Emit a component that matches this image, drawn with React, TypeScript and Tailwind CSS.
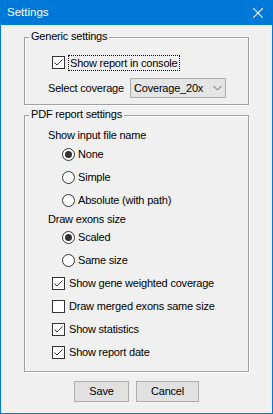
import type { ReactNode } from "react";

function Checkbox({ checked }: { checked: boolean }) {
  return (
    <span className="w-[13px] h-[13px] border border-[#333333] bg-white flex items-center justify-center shrink-0">
      {checked && (
        <svg width="11" height="11" viewBox="0 0 11 11">
          <path d="M1.5 5.5 L4 8 L9.5 2.5" stroke="#333333" fill="none" strokeWidth="1" />
        </svg>
      )}
    </span>
  );
}

function Radio({ checked }: { checked: boolean }) {
  return (
    <span className="w-[13px] h-[13px] rounded-full border border-[#333333] bg-white flex items-center justify-center shrink-0">
      {checked && <span className="w-[7px] h-[7px] rounded-full bg-[#333333]" />}
    </span>
  );
}

function Group({ title, className, children }: { title: string; className: string; children: ReactNode }) {
  return (
    <div
      className={`relative border border-[#a0a0a0] shadow-[inset_1px_1px_0_#ffffff,1px_1px_0_#ffffff] ${className}`}
    >
      <span className="absolute left-[4px] top-[-10px] bg-[#f0f0f0] px-[2px] leading-[17px] whitespace-nowrap">{title}</span>
      {children}
    </div>
  );
}

function CheckRow({ label, checked, className = "" }: { label: string; checked: boolean; className?: string }) {
  return (
    <div className={`h-[17px] flex items-center pl-[27px] gap-[4px] whitespace-nowrap ${className}`}>
      <Checkbox checked={checked} />
      <span>{label}</span>
    </div>
  );
}

function RadioRow({ label, checked, className = "" }: { label: string; checked: boolean; className?: string }) {
  return (
    <div className={`h-[17px] flex items-center pl-[37px] gap-[3px] whitespace-nowrap ${className}`}>
      <Radio checked={checked} />
      <span>{label}</span>
    </div>
  );
}

export default function App() {
  return (
    <div className="w-[273px] h-[414px] bg-[#f0f0f0] border border-t-0 border-[#0078d7] flex flex-col text-[11px] leading-[17px] tracking-[-0.2px] text-black font-['Liberation_Sans',Arial,sans-serif]">
      <div className="h-[25px] bg-[#0078d7] flex items-center justify-between pl-[6px] pr-[9px] text-white">
        <span className="text-[11.5px] tracking-normal">Settings</span>
        <svg width="10" height="10" viewBox="0 0 10 10">
          <path d="M0 0 L10 10 M10 0 L0 10" stroke="#ffffff" strokeWidth="1.1" />
        </svg>
      </div>

      <div className="flex flex-col px-[23px] pt-[12px]">
        <Group title="Generic settings" className="h-[68px] pt-[16px]">
          <div className="h-[17px] flex items-center pl-[27px] gap-[3px] whitespace-nowrap">
            <Checkbox checked />
            <span className="border border-dotted border-black px-[1px] leading-[14px]">Show report in console</span>
          </div>
          <div className="flex items-center mt-[7px] pl-[23px] whitespace-nowrap">
            <span className="w-[82px]">Select coverage</span>
            <div className="w-[96px] h-[20px] border border-[#acacac] bg-[#e5e5e5] flex items-center justify-between pl-[3px] pr-[3px]">
              <span>Coverage_20x</span>
              <svg width="9" height="6" viewBox="0 0 9 6">
                <path d="M0.5 1 L4.5 5 L8.5 1" stroke="#606060" fill="none" strokeWidth="1" />
              </svg>
            </div>
          </div>
        </Group>

        <Group title="PDF report settings" className="mt-[10px] h-[257px] pt-[11px]">
          <div className="h-[17px] flex items-center pl-[23px]">Show input file name</div>
          <RadioRow label="None" checked className="mt-[2px]" />
          <RadioRow label="Simple" checked={false} className="mt-[6px]" />
          <RadioRow label="Absolute (with path)" checked={false} className="mt-[6px]" />
          <div className="h-[17px] flex items-center pl-[23px] mt-[2px]">Draw exons size</div>
          <RadioRow label="Scaled" checked className="mt-[1px]" />
          <RadioRow label="Same size" checked={false} className="mt-[6px]" />
          <CheckRow label="Show gene weighted coverage" checked className="mt-[6px]" />
          <CheckRow label="Draw merged exons same size" checked={false} className="mt-[6px]" />
          <CheckRow label="Show statistics" checked className="mt-[6px]" />
          <CheckRow label="Show report date" checked className="mt-[6px]" />
        </Group>

        <div className="mt-[9px] flex justify-center gap-[7px]">
          <button className="w-[55px] h-[21px] border border-[#adadad] bg-[#e1e1e1] leading-[17px]">Save</button>
          <button className="w-[63px] h-[21px] border border-[#adadad] bg-[#e1e1e1] leading-[17px]">Cancel</button>
        </div>
      </div>
    </div>
  );
}
